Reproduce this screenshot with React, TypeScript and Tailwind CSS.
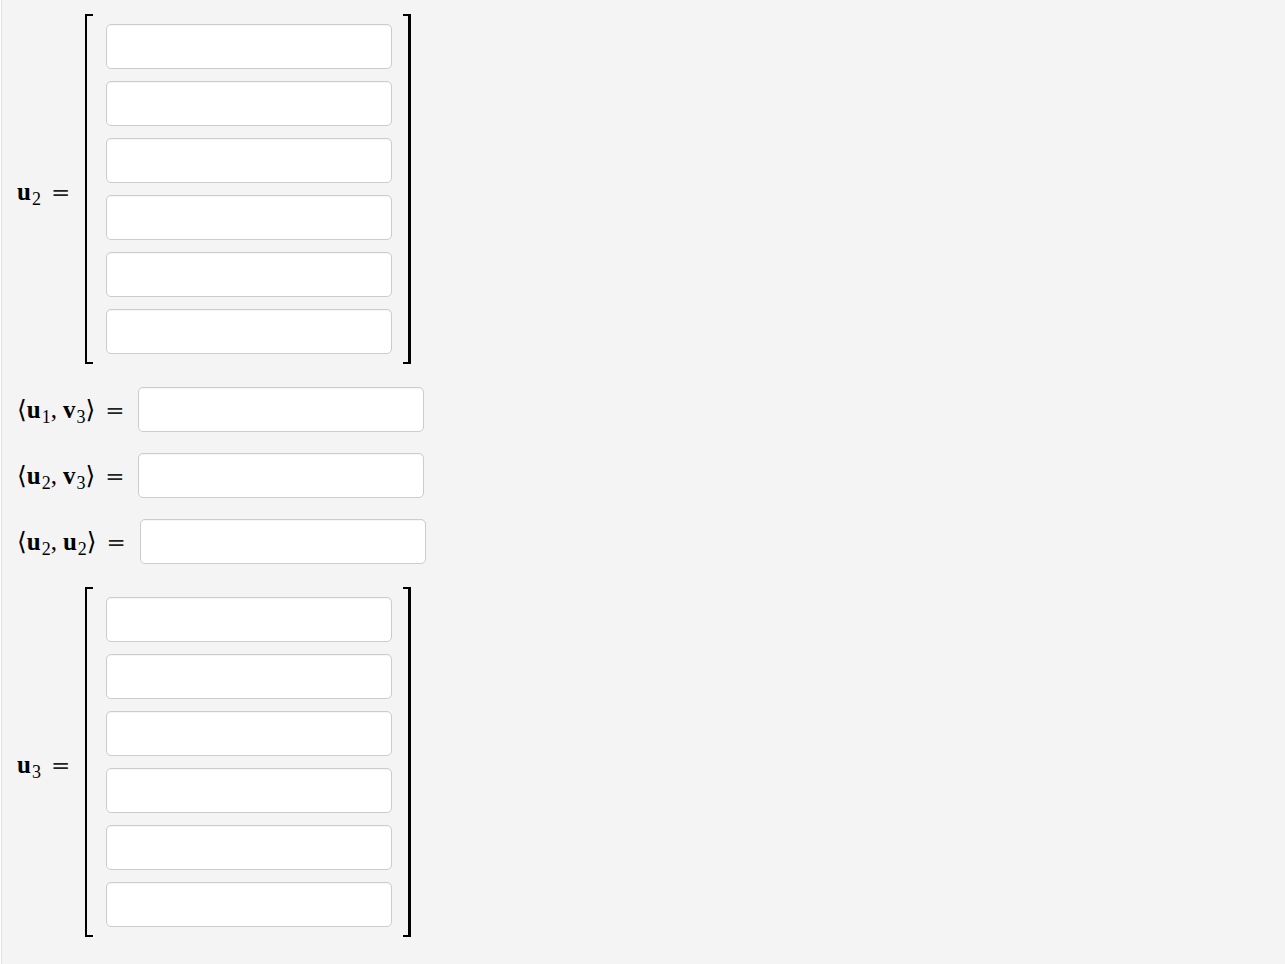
import React from "react";

const serif = { fontFamily: '"Liberation Serif", "DejaVu Serif", serif' };

function Field({ className = "" }: { className?: string }) {
  return (
    <input
      type="text"
      className={`h-[45px] rounded-[5px] border border-[#cccccc] bg-white shadow-[inset_0_1px_1px_rgba(0,0,0,0.04)] outline-none ${className}`}
    />
  );
}

function Vec({ name, sub }: { name: string; sub: string }) {
  return (
    <span className="inline-flex items-baseline">
      <span className="font-bold">{name}</span>
      <span className="relative top-[5px] ml-[1px] text-[18px]">{sub}</span>
    </span>
  );
}

function Eq() {
  return (
    <span
      className="ml-[10px] text-[23px] text-[#222]"
      style={{ fontFamily: '"DejaVu Serif", serif', fontWeight: 200 }}
    >
      =
    </span>
  );
}

function Matrix({ label }: { label: React.ReactNode }) {
  return (
    <div className="flex items-center">
      <div
        className="relative top-[2px] flex w-[68px] items-baseline text-[25px] leading-none text-black"
        style={serif}
      >
        {label}
        <Eq />
      </div>
      <div className="flex items-stretch">
        <div className="w-[8px] border-y-[2px] border-l-[2px] border-black" />
        <div className="flex flex-col gap-[12px] py-[10px] pl-[13px] pr-[11px]">
          {Array.from({ length: 6 }).map((_, i) => (
            <Field key={i} className="w-[286px]" />
          ))}
        </div>
        <div className="w-[8px] border-y-[2px] border-r-[3px] border-black" />
      </div>
    </div>
  );
}

function Inner({ a, b, wide }: { a: React.ReactNode; b: React.ReactNode; wide?: boolean }) {
  return (
    <div className="flex items-center">
      <div
        className={`${wide ? "w-[123px]" : "w-[121px]"} flex items-baseline text-[25px] leading-none text-black`}
        style={serif}
      >
        <span className="font-light" style={{ fontFamily: '"DejaVu Serif", serif' }}>⟨</span>
        {a}
        <span className="mr-[6px]">,</span>
        {b}
        <span className="font-light" style={{ fontFamily: '"DejaVu Serif", serif' }}>⟩</span>
        <Eq />
      </div>
      <Field className="w-[286px]" />
    </div>
  );
}

export default function App() {
  return (
    <div className="ml-px min-h-[964px] border-l border-[#e2e2e2] bg-[#f4f4f4] pl-[15px] pt-[14px]">
      <div className="flex flex-col">
        <Matrix label={<Vec name="u" sub="2" />} />
        <div className="mt-[23px] flex flex-col gap-[21px]">
          <Inner a={<Vec name="u" sub="1" />} b={<Vec name="v" sub="3" />} />
          <Inner a={<Vec name="u" sub="2" />} b={<Vec name="v" sub="3" />} />
          <Inner a={<Vec name="u" sub="2" />} b={<Vec name="u" sub="2" />} wide />
        </div>
        <div className="mt-[23px]">
          <Matrix label={<Vec name="u" sub="3" />} />
        </div>
      </div>
    </div>
  );
}
